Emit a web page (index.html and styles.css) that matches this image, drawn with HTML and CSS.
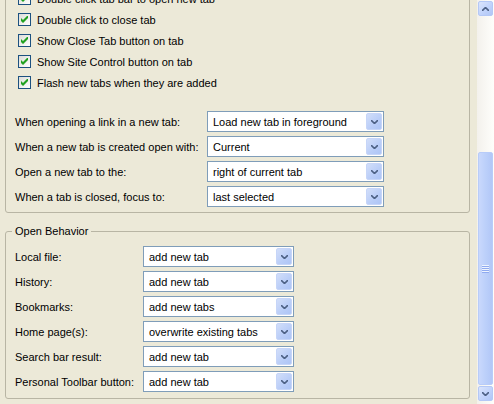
FILE: index.html
```html
<!DOCTYPE html>
<html>
<head>
<meta charset="utf-8">
<link rel="stylesheet" href="styles.css">
</head>
<body>
<div class="window">
  <div class="content">
    <div class="scroller">
      <fieldset class="group group-top">
        <div class="checks">
          <label class="check"><span class="box"><svg viewBox="0 0 7 7" width="7" height="7"><path d="M0 2 L2 4 L7 -1 L7 2 L2 7 L0 5 Z" fill="#21a121"/></svg></span>Double click tab bar to open new tab</label>
          <label class="check"><span class="box"><svg viewBox="0 0 7 7" width="7" height="7"><path d="M0 2 L2 4 L7 -1 L7 2 L2 7 L0 5 Z" fill="#21a121"/></svg></span>Double click to close tab</label>
          <label class="check"><span class="box"><svg viewBox="0 0 7 7" width="7" height="7"><path d="M0 2 L2 4 L7 -1 L7 2 L2 7 L0 5 Z" fill="#21a121"/></svg></span>Show Close Tab button on tab</label>
          <label class="check"><span class="box"><svg viewBox="0 0 7 7" width="7" height="7"><path d="M0 2 L2 4 L7 -1 L7 2 L2 7 L0 5 Z" fill="#21a121"/></svg></span>Show Site Control button on tab</label>
          <label class="check"><span class="box"><svg viewBox="0 0 7 7" width="7" height="7"><path d="M0 2 L2 4 L7 -1 L7 2 L2 7 L0 5 Z" fill="#21a121"/></svg></span>Flash new tabs when they are added</label>
        </div>
        <div class="rows rows-top">
          <span class="lbl">When opening a link in a new tab:</span>
          <div class="select"><span class="val">Load new tab in foreground</span><span class="arrow"><svg viewBox="0 0 7 4" width="7" height="4"><path d="M0 0 L3.5 3.5 L7 0" fill="none" stroke="#4d6185" stroke-width="1.6"/></svg></span></div>
          <span class="lbl">When a new tab is created open with:</span>
          <div class="select"><span class="val">Current</span><span class="arrow"><svg viewBox="0 0 7 4" width="7" height="4"><path d="M0 0 L3.5 3.5 L7 0" fill="none" stroke="#4d6185" stroke-width="1.6"/></svg></span></div>
          <span class="lbl">Open a new tab to the:</span>
          <div class="select"><span class="val">right of current tab</span><span class="arrow"><svg viewBox="0 0 7 4" width="7" height="4"><path d="M0 0 L3.5 3.5 L7 0" fill="none" stroke="#4d6185" stroke-width="1.6"/></svg></span></div>
          <span class="lbl">When a tab is closed, focus to:</span>
          <div class="select"><span class="val">last selected</span><span class="arrow"><svg viewBox="0 0 7 4" width="7" height="4"><path d="M0 0 L3.5 3.5 L7 0" fill="none" stroke="#4d6185" stroke-width="1.6"/></svg></span></div>
        </div>
      </fieldset>
      <fieldset class="group group-bottom">
        <legend>Open Behavior</legend>
        <div class="rows rows-bottom">
          <span class="lbl">Local file:</span>
          <div class="select"><span class="val">add new tab</span><span class="arrow"><svg viewBox="0 0 7 4" width="7" height="4"><path d="M0 0 L3.5 3.5 L7 0" fill="none" stroke="#4d6185" stroke-width="1.6"/></svg></span></div>
          <span class="lbl">History:</span>
          <div class="select"><span class="val">add new tab</span><span class="arrow"><svg viewBox="0 0 7 4" width="7" height="4"><path d="M0 0 L3.5 3.5 L7 0" fill="none" stroke="#4d6185" stroke-width="1.6"/></svg></span></div>
          <span class="lbl">Bookmarks:</span>
          <div class="select"><span class="val">add new tabs</span><span class="arrow"><svg viewBox="0 0 7 4" width="7" height="4"><path d="M0 0 L3.5 3.5 L7 0" fill="none" stroke="#4d6185" stroke-width="1.6"/></svg></span></div>
          <span class="lbl">Home page(s):</span>
          <div class="select"><span class="val">overwrite existing tabs</span><span class="arrow"><svg viewBox="0 0 7 4" width="7" height="4"><path d="M0 0 L3.5 3.5 L7 0" fill="none" stroke="#4d6185" stroke-width="1.6"/></svg></span></div>
          <span class="lbl">Search bar result:</span>
          <div class="select"><span class="val">add new tab</span><span class="arrow"><svg viewBox="0 0 7 4" width="7" height="4"><path d="M0 0 L3.5 3.5 L7 0" fill="none" stroke="#4d6185" stroke-width="1.6"/></svg></span></div>
          <span class="lbl">Personal Toolbar button:</span>
          <div class="select"><span class="val">add new tab</span><span class="arrow"><svg viewBox="0 0 7 4" width="7" height="4"><path d="M0 0 L3.5 3.5 L7 0" fill="none" stroke="#4d6185" stroke-width="1.6"/></svg></span></div>
        </div>
      </fieldset>
    </div>
  </div>
  <div class="scrollbar">
    <div class="sb-btn"><span class="sb-face"><svg viewBox="0 0 7 4" width="7" height="4"><path d="M0 4 L3.5 0.5 L7 4" fill="none" stroke="#4d6185" stroke-width="1.6"/></svg></span></div>
    <div class="sb-track"></div>
    <div class="sb-thumb"><span class="grip"></span></div>
    <div class="sb-btn"><span class="sb-face"><svg viewBox="0 0 7 4" width="7" height="4"><path d="M0 0 L3.5 3.5 L7 0" fill="none" stroke="#4d6185" stroke-width="1.6"/></svg></span></div>
    <div class="sb-rest"></div>
  </div>
</div>
</body>
</html>
```

FILE: styles.css
```css
* { box-sizing: border-box; }
html, body { margin: 0; padding: 0; }
body {
  background: #ece9d8;
  font-family: "Liberation Sans", Arial, sans-serif;
  font-size: 11px;
  color: #000;
  width: 494px;
  height: 404px;
  overflow: hidden;
}
.window {
  display: flex;
  height: 404px;
}
.content {
  width: 477px;
  height: 404px;
  overflow: hidden;
}
.scroller {
  margin-top: -20px;
}
.group {
  margin: 0 7px 0 5px;
  border: 1px solid #b8b5a4;
  border-radius: 3px;
  padding: 0;
  min-width: 0;
}
.group-top {
  padding: 7px 0 5px 0;
}
.checks {
  display: flex;
  flex-direction: column;
  padding-left: 12px;
}
.check {
  display: flex;
  align-items: center;
  height: 21px;
  gap: 6px;
}
.box {
  width: 13px;
  height: 13px;
  border: 1px solid #1c5180;
  background: linear-gradient(135deg, #dcdcd7, #ffffff);
  display: flex;
  align-items: center;
  justify-content: center;
  flex: none;
}
.box svg { display: block; }
.rows {
  display: grid;
  row-gap: 4px;
  align-items: center;
  padding-left: 9px;
}
.rows-top {
  grid-template-columns: 192px 177px;
  margin-top: 18px;
}
.rows-bottom {
  grid-template-columns: 128px 151px;
  margin-top: 8px;
}
.lbl { white-space: nowrap; }
.select {
  height: 21px;
  border: 1px solid #7f9db9;
  background: #fff;
  display: flex;
  align-items: center;
  padding: 1px;
}
.val {
  flex: 1;
  padding-left: 4px;
  white-space: nowrap;
  overflow: hidden;
}
.arrow {
  width: 16px;
  height: 17px;
  border-radius: 2px;
  background: linear-gradient(135deg, #d2def9 0%, #b9cdf8 60%, #aec5f6 100%);
  border: 1px solid #c6d5f8;
  display: flex;
  align-items: center;
  justify-content: center;
}
.arrow svg { display: block; }
.group-bottom {
  margin-top: 12px;
  padding: 0 0 6px 0;
}
.group-bottom legend {
  margin-left: 6px;
  padding: 0 3px;
  line-height: 13px;
}
.scrollbar {
  width: 17px;
  height: 404px;
  display: flex;
  flex-direction: column;
  background: linear-gradient(to right, #f3f1ec, #fefefb);
}
.sb-btn {
  height: 17px;
  padding: 1px;
  flex: none;
}
.sb-face {
  display: flex;
  align-items: center;
  justify-content: center;
  width: 15px;
  height: 15px;
  border-radius: 2px;
  border: 1px solid #b4c8f6;
  background: linear-gradient(135deg, #dbe5fc 0%, #c1d3fb 55%, #b0c6f6 100%);
}
.sb-face svg { display: block; }
.sb-track {
  height: 135px;
  flex: none;
}
.sb-thumb {
  height: 233px;
  flex: none;
  margin: 0 1px;
  border-radius: 2px;
  border: 1px solid #b8ccf9;
  background: linear-gradient(to right, #c9d8fc 0%, #bcd0fa 50%, #b2c7f7 100%);
  display: flex;
  align-items: center;
  justify-content: center;
}
.grip {
  width: 7px;
  height: 8px;
  background: repeating-linear-gradient(to bottom, #eef4fe 0, #eef4fe 1px, #8faaf0 1px, #8faaf0 2px);
}
.sb-rest {
  flex: 1;
}
```
